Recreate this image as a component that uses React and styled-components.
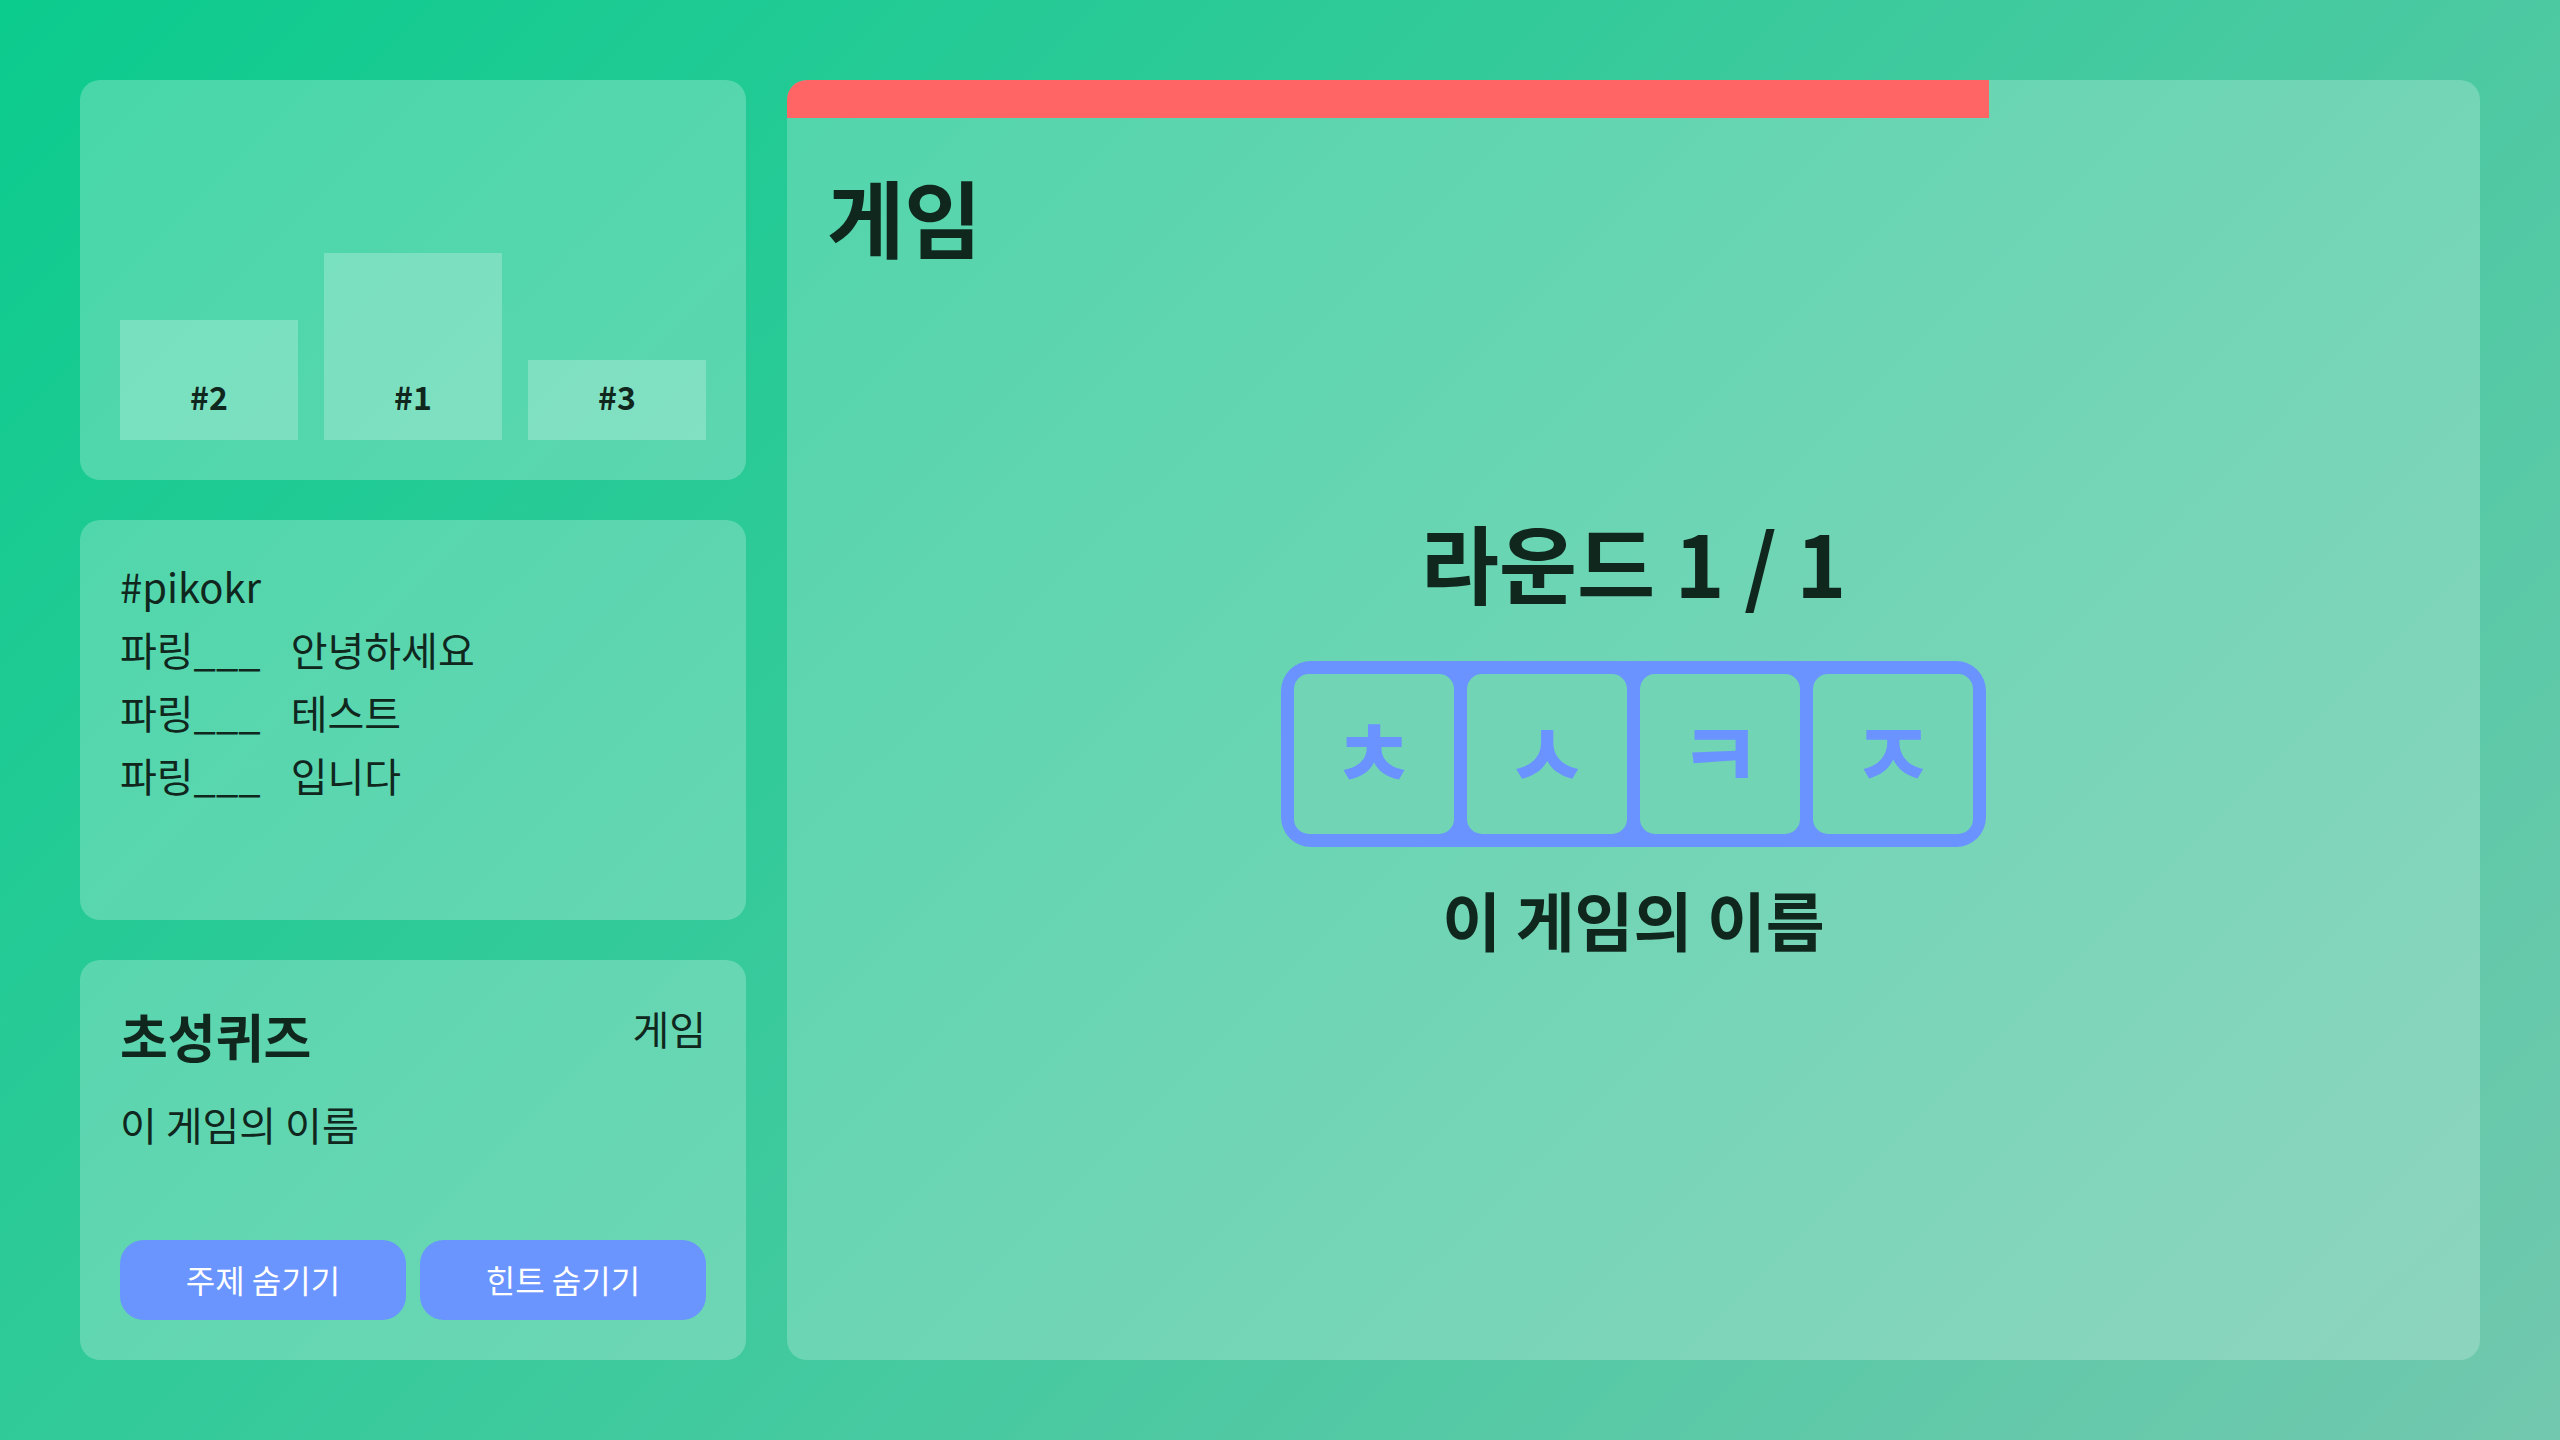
import React from "react";
import styled, { createGlobalStyle } from "styled-components";

const GlobalStyle = createGlobalStyle`
  html, body {
    margin: 0;
    padding: 0;
  }
  body {
    font-family: "Noto Sans CJK KR", "Noto Sans", sans-serif;
    color: #10271e;
  }
  * {
    box-sizing: border-box;
  }
`;

const Page = styled.div`
  display: grid;
  grid-template-columns: 666px 1fr;
  gap: 41px;
  width: 2560px;
  height: 1440px;
  padding: 80px;
  background: linear-gradient(135deg, #0bcb8d 0%, #72c8ae 100%);
`;

const Sidebar = styled.div`
  display: grid;
  grid-template-rows: repeat(3, 1fr);
  gap: 40px;
`;

const Panel = styled.section`
  display: flex;
  flex-direction: column;
  min-height: 0;
  padding: 40px;
  border-radius: 20px;
  background-color: rgba(255, 255, 255, 0.24);
`;

const Podium = styled(Panel)`
  flex-direction: row;
  align-items: flex-end;
  gap: 26px;
`;

const Step = styled.div`
  flex: 1;
  height: ${props => props.height}px;
  display: flex;
  align-items: flex-end;
  justify-content: center;
  padding-bottom: 21px;
  background-color: rgba(255, 255, 255, 0.24);
  font-size: 32px;
  font-weight: 700;
  line-height: 46px;
`;

const Chat = styled(Panel)`
  padding-top: 35px;
`;

const ChatLine = styled.div`
  display: flex;
  gap: 30px;
  font-size: 40px;
  line-height: 63px;
`;

const InfoHeader = styled.div`
  display: flex;
  justify-content: space-between;
  align-items: flex-start;
`;

const InfoTitle = styled.h2`
  margin: 0;
  font-size: 52px;
  font-weight: 700;
  line-height: 72px;
`;

const InfoText = styled.div`
  font-size: 40px;
  line-height: 60px;
  margin-top: ${props => props.spaced ? "22px" : "-2px"};
`;

const ButtonRow = styled.div`
  display: grid;
  grid-template-columns: 1fr 1fr;
  gap: 14px;
  margin-top: auto;
`;

const Button = styled.button`
  height: 80px;
  padding-bottom: 4px;
  border: 0;
  border-radius: 24px;
  background-color: #6a94fe;
  color: #fff;
  font-family: inherit;
  font-size: 32px;
`;

const Main = styled.main`
  display: flex;
  flex-direction: column;
  border-radius: 20px;
  overflow: hidden;
  background-color: rgba(255, 255, 255, 0.22);
`;

const Timer = styled.div`
  height: 38px;
  width: ${props => props.percent}%;
  background-color: #ff6565;
`;

const Heading = styled.h1`
  margin: 0;
  padding: 38px 40px 0;
  font-size: 84px;
  font-weight: 700;
  line-height: 120px;
`;

const Stage = styled.div`
  flex: 1;
  display: flex;
  flex-direction: column;
  align-items: center;
  justify-content: center;
  padding-bottom: 170px;
`;

const Round = styled.div`
  font-size: 85px;
  font-weight: 700;
  line-height: 100px;
`;

const Slots = styled.div`
  display: flex;
  gap: 13px;
  margin: 50px 0 33px;
  padding: 13px;
  border-radius: 30px;
  background-color: #6a93ff;
`;

const Slot = styled.div`
  width: 160px;
  height: 160px;
  display: flex;
  align-items: center;
  justify-content: center;
  padding-bottom: 10px;
  border-radius: 15px;
  background-color: #71d4b4;
  color: #6a93ff;
  font-size: 92px;
  font-weight: 700;
`;

const Hint = styled.div`
  font-size: 64px;
  font-weight: 700;
  line-height: 76px;
`;

const ranks = [
  { label: "#2", height: 120 },
  { label: "#1", height: 187 },
  { label: "#3", height: 80 }
];

const chat = [
  { name: "파링___", text: "안녕하세요" },
  { name: "파링___", text: "테스트" },
  { name: "파링___", text: "입니다" }
];

const letters = ["ㅊ", "ㅅ", "ㅋ", "ㅈ"];

export default function App() {
  return (
    <>
      <GlobalStyle />
      <Page>
        <Sidebar>
          <Podium>
            {ranks.map(r => (
              <Step key={r.label} height={r.height}>
                {r.label}
              </Step>
            ))}
          </Podium>
          <Chat>
            <ChatLine>#pikokr</ChatLine>
            {chat.map((c, i) => (
              <ChatLine key={i}>
                <span>{c.name}</span>
                <span>{c.text}</span>
              </ChatLine>
            ))}
          </Chat>
          <Panel>
            <InfoHeader>
              <InfoTitle>초성퀴즈</InfoTitle>
              <InfoText>게임</InfoText>
            </InfoHeader>
            <InfoText spaced>이 게임의 이름</InfoText>
            <ButtonRow>
              <Button>주제 숨기기</Button>
              <Button>힌트 숨기기</Button>
            </ButtonRow>
          </Panel>
        </Sidebar>
        <Main>
          <Timer percent={71} />
          <Heading>게임</Heading>
          <Stage>
            <Round>라운드 1 / 1</Round>
            <Slots>
              {letters.map(l => (
                <Slot key={l}>{l}</Slot>
              ))}
            </Slots>
            <Hint>이 게임의 이름</Hint>
          </Stage>
        </Main>
      </Page>
    </>
  );
}
